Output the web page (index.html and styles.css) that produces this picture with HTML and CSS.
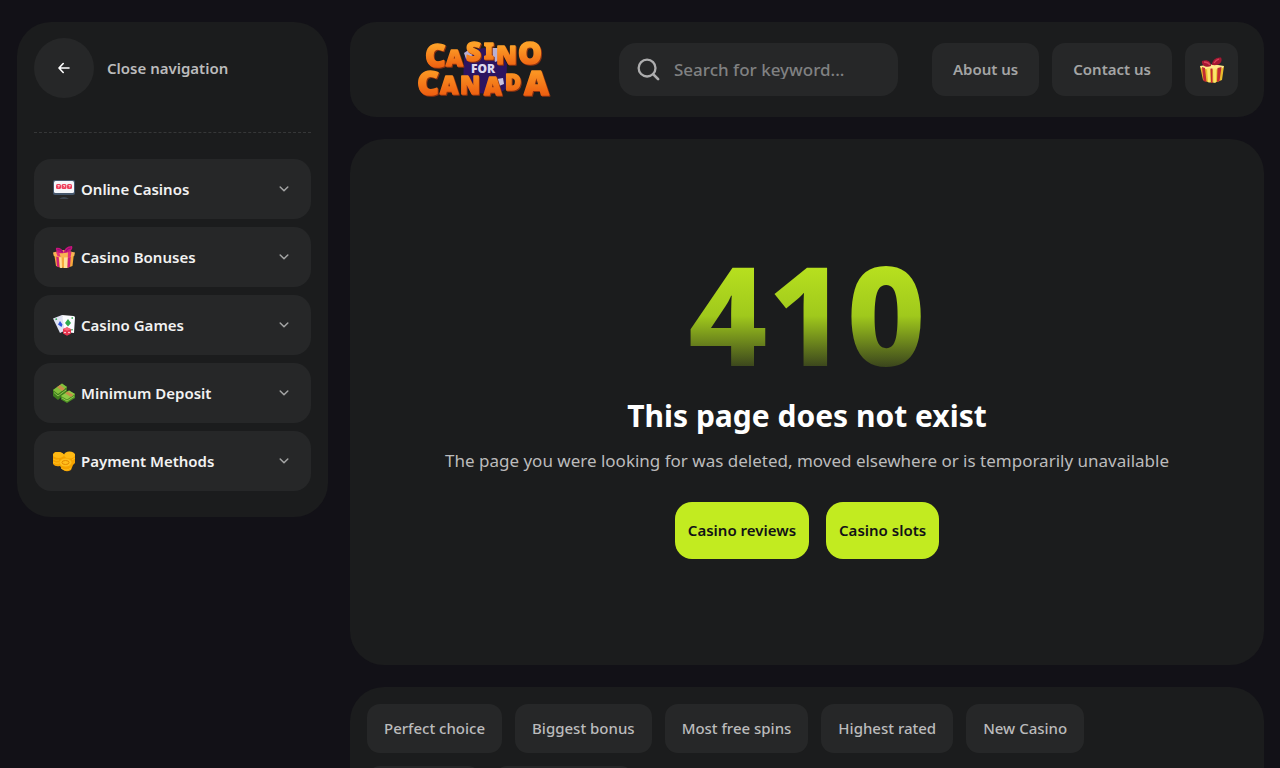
FILE: index.html
```html
<!DOCTYPE html>
<html lang="en">

<head>
  <meta charset="UTF-8" />
  <meta name="viewport" content="width=device-width, initial-scale=1.0" />
  <title>410 - Casino for Canada</title>
  <link rel="stylesheet" href="styles.css">
</head>

<body>
  <!-- Shared icons -->
  <svg class="sprite" aria-hidden="true">
    <symbol id="chevron" viewBox="0 0 10 10">
      <path d="M1.2 3l3.8 3.8L8.8 3" fill="none" stroke="currentColor" stroke-width="1.5" stroke-linecap="round" stroke-linejoin="round" />
    </symbol>
  </svg>

  <div class="layout">
    <!-- Sidebar -->
    <aside class="sidebar">
      <button class="close-nav" type="button">
        <span class="close-icon">
          <svg width="12" height="12" viewBox="0 0 12 12" aria-hidden="true">
            <path d="M11 6H1.2M5.2 1.5L1 6l4.2 4.5" fill="none" stroke="#fff" stroke-width="1.6" stroke-linecap="round" stroke-linejoin="round" />
          </svg>
        </span>
        Close navigation
      </button>

      <nav class="menu">
        <button class="menu-item" type="button">
          <svg class="menu-icon" viewBox="0 0 22 22" aria-hidden="true">
            <rect x="0" y="2" width="22" height="15" rx="2" fill="#44566c" />
            <rect x="1" y="3" width="20" height="12" rx="1.5" fill="#f4f6fa" />
            <rect x="3" y="6" width="5" height="5" rx="1.5" fill="#ee3f5c" />
            <rect x="8.5" y="6" width="5" height="5" rx="1.5" fill="#ee3f5c" />
            <rect x="14" y="6" width="5" height="5" rx="1.5" fill="#ee3f5c" />
            <path d="M4.600 7.500h1.800l-1 2M10.100 7.500h1.800l-1 2M15.600 7.500h1.800l-1 2" fill="none" stroke="#fff" stroke-width=".7" />
            <path d="M6 20.500q5-2 10 0z" fill="#52657c" />
          </svg>
          <span>Online Casinos</span>
          <svg class="chevron"><use href="#chevron" /></svg>
        </button>
        <button class="menu-item" type="button">
          <svg class="menu-icon" viewBox="0 0 22 22" aria-hidden="true">
            <path d="M1 7l10 2 10-2-1.500 13Q11 24 3 20z" fill="#f6a93c" />
            <path d="M11 9l4-.800-.500 14L11 22.500zM6 8.200l2.500.5.500 13.500-2-.4z" fill="#ffdf96" />
            <path d="M3 8l2.500.6 1 13-2.500-1zM15 8.600l3-.8-1 13-2.600.9z" fill="#cf1f78" />
            <path d="M0 6.500L10 4l12 2.500-.800 3.500q-10 3-20.400 0z" fill="#f8b552" />
            <path d="M3 6l3-.800 1.500 5.600-3-.5zM15 5l3.500.8-.8 5-2.900.5z" fill="#e0307c" />
            <path d="M11 7C7 8 2 6 3 2c3-1 7 1 8 5zM11 7c0-4 3-7 8-7 1.500 3-2 7-8 7z" fill="#c8147c" />
            <path d="M4.500 3.500c2 0 4 1 5 2.500M13 5.500c1-2 3-3.500 5-3.500" fill="none" stroke="#8f1070" stroke-width="1.2" />
          </svg>
          <span>Casino Bonuses</span>
          <svg class="chevron"><use href="#chevron" /></svg>
        </button>
        <button class="menu-item" type="button">
          <svg class="menu-icon" viewBox="0 0 22 22" aria-hidden="true">
            <path d="M0 4.500L9 1l6 14-8 4z" fill="#dfe3f3" />
            <path d="M9 1l11.500 1q1.500 0 1.500 1.500L21 19l-9-1z" fill="#fbfcff" />
            <path d="M7 7l2.500 3.500L8.500 13 5 10.500z" fill="#2f54dd" />
            <path d="M15 5l3 4-3 3.500L12 9z" fill="#2ea94f" />
            <path d="M2.500 5.500l1.500-.6M18.500 4h1.500M19 15v1.500" stroke="#2ea94f" stroke-width="1.4" />
            <path d="M10 15l4-1.800 4.200 2-.4 4.600-3.800 2-4-2.300z" fill="#e7334f" />
            <path d="M10 15l4 1.700 4.200-1.500L14 13.200z" fill="#f8667a" />
            <circle cx="12" cy="18.500" r=".8" fill="#fff" />
            <circle cx="16" cy="18.500" r=".8" fill="#fff" />
          </svg>
          <span>Casino Games</span>
          <svg class="chevron"><use href="#chevron" /></svg>
        </button>
        <button class="menu-item" type="button">
          <svg class="menu-icon" viewBox="0 0 22 22" aria-hidden="true">
            <path d="M0 8l9-6.500 5 3.500v5L5 18l-5-4z" fill="#3f7f1d" />
            <path d="M0 8l9-6.500 5 3.500-9 7z" fill="#83bf3c" />
            <path d="M4 5.200L7 3l5 3.700-3 2.400z" fill="#c98d4a" />
            <path d="M8 14l8-5.500 6 3.500v4l-8 5-6-3.500z" fill="#4b9023" />
            <path d="M8 14l8-5.500 6 3.500-8 5.500z" fill="#91cb46" />
            <path d="M12 11.300l2.600-1.800 5.900 3.600-2.600 1.800z" fill="#c98d4a" />
            <path d="M1 10.500l4 3.500 8-6M9 16l5 3 7-4.500" fill="none" stroke="#a5d85a" stroke-width=".8" />
          </svg>
          <span>Minimum Deposit</span>
          <svg class="chevron"><use href="#chevron" /></svg>
        </button>
        <button class="menu-item" type="button">
          <svg class="menu-icon" viewBox="0 0 22 22" aria-hidden="true">
            <path d="M0 4v10q2 3 7 2l2 3q4 4 9 1l2-5 2-2V4l-5-2-5 3-5-3-5 0z" fill="#f5a300" />
            <ellipse cx="5.500" cy="5" rx="5.500" ry="3" fill="#ffba14" />
            <ellipse cx="16.500" cy="5" rx="5.500" ry="3.500" fill="#ffba14" />
            <ellipse cx="12.500" cy="12.500" rx="6" ry="4" fill="#ffbe1c" />
            <ellipse cx="12.500" cy="12.500" rx="3.500" ry="2" fill="none" stroke="#e58b00" />
            <path d="M0 9q3 2 6 1M0 12q3 2 6 1M19 10l3-2M8 18q5 4 10 0" fill="none" stroke="#ffbe1c" />
          </svg>
          <span>Payment Methods</span>
          <svg class="chevron"><use href="#chevron" /></svg>
        </button>
      </nav>
    </aside>

    <div class="content">
      <!-- Header -->
      <header class="header">
        <a class="logo" href="#" aria-label="Casino for Canada">
          <svg width="134" height="56" viewBox="0 0 134 56">
            <defs>
              <linearGradient id="orangeTop" gradientUnits="userSpaceOnUse" x1="0" y1="1" x2="0" y2="27">
                <stop offset="0.1" stop-color="#fda028" />
                <stop offset="1" stop-color="#ee5c0f" />
              </linearGradient>
              <linearGradient id="orangeBottom" gradientUnits="userSpaceOnUse" x1="0" y1="28" x2="0" y2="55">
                <stop offset="0.1" stop-color="#fb9422" />
                <stop offset="1" stop-color="#ec5a0f" />
              </linearGradient>
            </defs>
            <path d="M49 9l18-3 14 2 9 14-1 25-8 5-26-1-9-9 1-25z" fill="#2c1460" />
            <path d="M47 11l6-4 3 6-7 4zM73 6h9l4 11-8 3z" fill="#b9b0d2" />
            <path d="M80 37l6-1 1 6-5 2z" fill="#c9c2e0" />
            <g class="logo-letters">
              <text fill="url(#orangeTop)" stroke="url(#orangeTop)"><tspan x="8" y="25" font-size="32">C</tspan><tspan x="29" y="24" font-size="23">A</tspan><tspan x="49" y="19" font-size="26">S</tspan><tspan x="67" y="17" font-size="22">I</tspan><tspan x="79" y="22" font-size="25">N</tspan><tspan x="101" y="22" font-size="30">O</tspan></text>
              <text fill="url(#orangeBottom)" stroke="url(#orangeBottom)"><tspan x="0" y="53" font-size="34">C</tspan><tspan x="23" y="52" font-size="25">A</tspan><tspan x="43" y="52" font-size="24">N</tspan><tspan x="67" y="53" font-size="24">A</tspan><tspan x="88" y="48" font-size="22">D</tspan><tspan x="107" y="53" font-size="34">A</tspan></text>
            </g>
            <text class="logo-for" x="54" y="31">FOR</text>
          </svg>
        </a>

        <form class="search">
          <svg width="23" height="23" viewBox="0 0 24 24" aria-hidden="true">
            <circle cx="10.500" cy="10.500" r="8.800" fill="none" stroke="#adadae" stroke-width="2.400" />
            <path d="M16.800 16.800L22 22" stroke="#adadae" stroke-width="2.800" stroke-linecap="round" />
          </svg>
          <input type="search" placeholder="Search for keyword..." aria-label="Search for keyword" />
        </form>

        <div class="header-links">
          <a class="header-btn" href="#">About us</a>
          <a class="header-btn" href="#">Contact us</a>
          <button class="gift-btn" type="button" aria-label="Bonuses">
            <svg width="26" height="26" viewBox="0 0 26 26" aria-hidden="true">
              <path d="M1 9q12 4 24 0l-2 14q-10 5-19 0z" fill="#e9bb2c" />
              <path d="M1 9q12-3 24 0l-1 2q-11 3-22 0z" fill="#ffe98a" />
              <path d="M8 11h3l.5 14.500-2.500-.3zM14 11.500h3.500l-.500 14-2.500.5z" fill="#fbe56c" />
              <path d="M3 10l3 1 1.500 14-3-1zM11.500 11.500h2v14.500h-1.500zM18.500 11l4-1-2 14-2.500 1z" fill="#c22a33" />
              <path d="M12 9C8 11 2 9 3 4c5-2 9 0 9 5zM13 8c0-5 4-8 9-7.500 2 4-1 8.500-9 7.500z" fill="#a51732" />
              <path d="M5 5q4 0 6 3M15 6q2-3 5-4" fill="none" stroke="#d8415a" stroke-width="1.3" />
            </svg>
          </button>
        </div>
      </header>

      <!-- Error message -->
      <main class="error">
        <div class="error-code">410</div>
        <h1>This page does not exist</h1>
        <p>The page you were looking for was deleted, moved elsewhere or is temporarily unavailable</p>
        <div class="error-actions">
          <a class="btn" href="#">Casino reviews</a>
          <a class="btn" href="#">Casino slots</a>
        </div>
      </main>

      <!-- Filters -->
      <section class="filters">
        <button type="button">Perfect choice</button>
        <button type="button">Biggest bonus</button>
        <button type="button">Most free spins</button>
        <button type="button">Highest rated</button>
        <button type="button">New Casino</button>
        <button type="button">Top payout</button>
        <button type="button">Mobile casinos</button>
      </section>
    </div>
  </div>
</body>

</html>
```
FILE: styles.css
```css
* {
  box-sizing: border-box;
}

body {
  margin: 0;
  background: #121117;
  color: #fff;
  font-family: 'Noto Sans', sans-serif;
  font-size: 15px;
  line-height: 19px;
  overflow-x: hidden;
  scrollbar-width: none;
}

body::-webkit-scrollbar {
  display: none;
}

a {
  color: inherit;
  text-decoration: none;
}

button,
input {
  font: inherit;
  color: inherit;
  border: 0;
  background: none;
}

button {
  cursor: pointer;
}

.sprite {
  display: none;
}

.layout {
  display: flex;
  align-items: flex-start;
  gap: 22px;
  padding: 22px 16px 22px 17px;
}

/* Sidebar */
.sidebar {
  flex: 0 0 311px;
  padding: 16px 17px 26px;
  background: #1b1c1d;
  border-radius: 34px;
}

.close-nav {
  display: flex;
  align-items: center;
  gap: 13px;
  width: 100%;
  padding: 0 0 34px;
  border-bottom: 1px dashed #363738;
  color: #bbbbbc;
  font-weight: 600;
}

.close-icon {
  display: flex;
  align-items: center;
  justify-content: center;
  width: 60px;
  height: 60px;
  border-radius: 50%;
  background: #262728;
}

.menu {
  display: flex;
  flex-direction: column;
  gap: 8px;
  margin-top: 26px;
}

.menu-item {
  display: flex;
  align-items: center;
  gap: 6px;
  height: 60px;
  padding: 0 22px 0 19px;
  border-radius: 17px;
  background: #262728;
  color: #f2f2f2;
  font-weight: 600;
}

.menu-icon {
  width: 22px;
  height: 22px;
}

.chevron {
  width: 10px;
  height: 10px;
  margin-left: auto;
  color: #a4a5a5;
}

/* Content */
.content {
  flex: 1;
  min-width: 0;
  display: flex;
  flex-direction: column;
  gap: 22px;
}

.header {
  display: flex;
  align-items: center;
  min-height: 95px;
  padding: 0 26px 0 67px;
  background: #1b1c1d;
  border-radius: 26px;
}

.logo {
  display: flex;
  margin-right: 68px;
}

.logo svg {
  overflow: visible;
}

.logo-letters {
  font-weight: 900;
  stroke-width: 1.5;
  stroke-linejoin: round;
  filter: drop-shadow(1px 1px 0 #8e3210);
}

.logo-for {
  font-size: 12px;
  font-weight: 900;
  fill: #dcd9ee;
}

.search {
  display: flex;
  align-items: center;
  flex: 1;
  min-width: 0;
  gap: 14px;
  height: 53px;
  margin-right: 34px;
  padding: 0 18px;
  border-radius: 17px;
  background: #262728;
}

.search svg {
  flex: none;
}

.search input {
  width: 100%;
  min-width: 0;
  padding: 0;
  font-size: 17px;
  font-weight: 500;
  outline: none;
}

.search input::placeholder {
  color: #808182;
  opacity: 1;
}

.header-links {
  display: flex;
  gap: 13px;
}

.header-btn,
.gift-btn {
  display: flex;
  align-items: center;
  justify-content: center;
  height: 53px;
  padding: 0 21px;
  border-radius: 13px;
  background: #262728;
  color: #a4a5a5;
  font-weight: 600;
}

.gift-btn {
  width: 53px;
  padding: 0;
}

/* Error message */
.error {
  display: flex;
  flex-direction: column;
  align-items: center;
  padding: 104px 20px 106px;
  background: #1b1c1d;
  border-radius: 34px;
  text-align: center;
}

.error-code {
  font-size: 137px;
  font-weight: 800;
  line-height: 140px;
  background: linear-gradient(180deg, #c2eb20 0%, #a0c91c 52%, #1b1c1d 100%);
  -webkit-background-clip: text;
  background-clip: text;
  color: transparent;
}

.error h1 {
  margin: 12px 0 0;
  font-size: 30px;
  font-weight: 700;
  line-height: 42px;
}

.error p {
  margin: 12px 0 0;
  color: #bbbbbc;
  font-size: 17px;
  line-height: 24px;
}

.error-actions {
  display: flex;
  gap: 17px;
  margin-top: 29px;
}

.btn {
  padding: 19px 13px;
  border-radius: 17px;
  background: #c2eb20;
  color: #121117;
  font-weight: 600;
}

/* Filters */
.filters {
  display: flex;
  flex-wrap: wrap;
  gap: 13px;
  padding: 17px 100px 17px 17px;
  background: #1b1c1d;
  border-radius: 34px;
}

.filters button {
  height: 49px;
  padding: 0 17px;
  border-radius: 13px;
  background: #262728;
  color: #bbbbbc;
  font-weight: 500;
}
```
